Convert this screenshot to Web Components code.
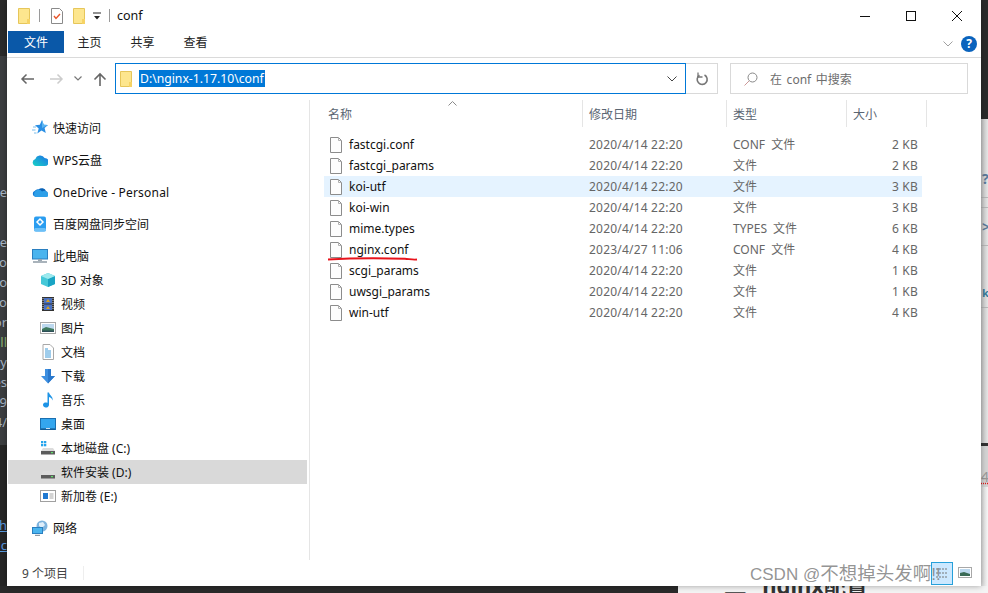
<!DOCTYPE html>
<html lang="zh">
<head>
<meta charset="utf-8">
<title>conf</title>
<style>
    html, body { margin: 0; padding: 0; }
    body { font-family: "Noto Sans", "Noto Sans CJK SC", sans-serif; overflow: hidden; }
</style>
</head>
<body>
<desktop-frame>
    <title-bar slot="title">conf</title-bar>
    <ribbon-tabs slot="tabs"></ribbon-tabs>
    <address-row slot="address" path="D:\nginx-1.17.10\conf" search="在 conf 中搜索"></address-row>
    <nav-tree slot="nav">
        <nav-group>
            <nav-item icon="star">快速访问</nav-item>
        </nav-group>
        <nav-group>
            <nav-item icon="wps">WPS云盘</nav-item>
        </nav-group>
        <nav-group>
            <nav-item icon="onedrive" style="letter-spacing:.2px">OneDrive - Personal</nav-item>
        </nav-group>
        <nav-group>
            <nav-item icon="baidu">百度网盘同步空间</nav-item>
        </nav-group>
        <nav-group>
            <nav-item icon="pc">此电脑</nav-item>
            <nav-item sub icon="cube">3D 对象</nav-item>
            <nav-item sub icon="video">视频</nav-item>
            <nav-item sub icon="pic">图片</nav-item>
            <nav-item sub icon="doc">文档</nav-item>
            <nav-item sub icon="down">下载</nav-item>
            <nav-item sub icon="music">音乐</nav-item>
            <nav-item sub icon="desk">桌面</nav-item>
            <nav-item sub icon="drivec">本地磁盘 (C:)</nav-item>
            <nav-item sub selected icon="drive">软件安装 (D:)</nav-item>
            <nav-item sub icon="drivee">新加卷 (E:)</nav-item>
        </nav-group>
        <nav-group>
            <nav-item icon="net">网络</nav-item>
        </nav-group>
    </nav-tree>
    <file-list slot="files">
        <file-row name="fastcgi.conf" date="2020/4/14 22:20" type="CONF 文件" size="2 KB"></file-row>
        <file-row name="fastcgi_params" date="2020/4/14 22:20" type="文件" size="2 KB"></file-row>
        <file-row hover name="koi-utf" date="2020/4/14 22:20" type="文件" size="3 KB"></file-row>
        <file-row name="koi-win" date="2020/4/14 22:20" type="文件" size="3 KB"></file-row>
        <file-row name="mime.types" date="2020/4/14 22:20" type="TYPES 文件" size="6 KB"></file-row>
        <file-row marked name="nginx.conf" date="2023/4/27 11:06" type="CONF 文件" size="4 KB"></file-row>
        <file-row name="scgi_params" date="2020/4/14 22:20" type="文件" size="1 KB"></file-row>
        <file-row name="uwsgi_params" date="2020/4/14 22:20" type="文件" size="1 KB"></file-row>
        <file-row name="win-utf" date="2020/4/14 22:20" type="文件" size="4 KB"></file-row>
    </file-list>
    <status-bar slot="status">9 个项目</status-bar>
</desktop-frame>

<script>
{
    // small svg icons, all in a 16x16 box
    const icons = {
        star: `<path d="M10 0l1.700 4.700 4.300.3-3.400 3 1.200 5L9.500 10.400 5.300 13.500l1.400-5L3 5.300l4.800-.5z" fill="#2a8fe4"/><path d="M10 0l1.700 4.700 4.300.3-6 3z" fill="#5cb6f2"/><path d="M1 7h3M0 10h3.500M2 13h2.500" stroke="#79bcea" fill="none"/>`,
        wps: `<defs><linearGradient id="w" x1="0" y1="1" x2="1" y2="0"><stop offset="0" stop-color="#19d3c5"/><stop offset="1" stop-color="#1c6fe8"/></linearGradient></defs><path d="M4 14a3.500 3.500 0 0 1-.6-6.900A5 5 0 0 1 12.600 6 4 4 0 0 1 12.500 14z" fill="url(#w)"/>`,
        onedrive: `<path d="M6.500 5.500a4.600 4.600 0 0 1 7.600 1.800A3.400 3.400 0 0 1 16 8.500L9 11z" fill="#0a64b8"/><path d="M3 12.500A2.900 2.900 0 0 1 2.600 7 4.600 4.600 0 0 1 8.800 6.600L11 9z" fill="#0f78d4"/><path d="M3 13h11.400a2.300 2.300 0 0 0 1-4.400A4 4 0 0 0 10 7.500 3.500 3.500 0 0 0 3 13z" fill="#2d9fe8"/>`,
        baidu: `<rect x="2" y="0.500" width="12" height="15" rx="2" fill="#2a9df0"/><rect x="2" y="12" width="12" height="3.500" rx="1.500" fill="#6cc0f7"/><path d="M8 3l3 3-3 3-3-3z" fill="none" stroke="#fff" stroke-width="1.500"/>`,
        pc: `<rect x="0.500" y="1.500" width="15" height="9.500" fill="#4ab4ee" stroke="#2a7fc0"/><rect x="6" y="11" width="4" height="2" fill="#9aa7b2"/><path d="M1 14h14" stroke="#8d9aa5" stroke-width="1.500"/>`,
        cube: `<path d="M8 1l7 3v8l-7 3-7-3V4z" fill="#45c8d8"/><path d="M8 7l7-3v8l-7 3z" fill="#19a4c4"/><path d="M8 1l7 3-7 3-7-3z" fill="#9ce9ee"/>`,
        video: `<rect x="2" y="1" width="12" height="14" fill="#333"/><rect x="4" y="2" width="8" height="5.500" fill="#4a72c4"/><rect x="4" y="8.500" width="8" height="5.500" fill="#4a72c4"/><path d="M6 6l2-3 2 3zM6 13l2-3 2 3z" fill="#d8a020"/><path d="M3 2v12" stroke="#ccc" stroke-dasharray="1 1"/><path d="M13 2v12" stroke="#ccc" stroke-dasharray="1 1"/>`,
        pic: `<rect x="0.500" y="2.500" width="15" height="11" fill="#fff" stroke="#a8a8a8"/><rect x="2" y="4" width="12" height="8" fill="#bcd8ee"/><path d="M2 9l4-2 8 2v3H2z" fill="#3f7a5e"/><path d="M2 10.500h12V12H2z" fill="#2e4f58"/>`,
        doc: `<path d="M3 .5h7l3.500 3.500v11.500H3z" fill="#fff" stroke="#a8a8a8"/><path d="M5 5h3M5 7h6M5 9h6M5 11h6M5 13h6" stroke="#3f9ad8"/>`,
        down: `<path d="M5 1h6v7h4l-7 7.500L1 8h4z" fill="#3d8fe0"/><path d="M8 1h3v7h4l-7 7.500z" fill="#2a78cc"/>`,
        music: `<path d="M7.500 0.500h1.500c.5 3 4.500 4 3.500 8-.4-2-2-3.200-3.500-3.500V13a3 2.500 0 1 1-1.500-2.200z" fill="#1e94e6"/>`,
        desk: `<rect x="0.500" y="2.500" width="15" height="11" fill="#34a6ee" stroke="#1a6fb0"/><path d="M1 13h14" stroke="#0e4d80"/><rect x="6" y="12" width="4" height="1" fill="#cde"/>`,
        drivec: `<rect x="1" y="1" width="2.300" height="2.300" fill="#25a4ec"/><rect x="4" y="1" width="2.300" height="2.300" fill="#25a4ec"/><rect x="1" y="4" width="2.300" height="2.300" fill="#25a4ec"/><rect x="4" y="4" width="2.300" height="2.300" fill="#25a4ec"/><path d="M3 8h10l2 3H1z" fill="#dcdcdc"/><rect x="1" y="11" width="14" height="3.500" fill="#5c5c5c"/><rect x="11" y="12" width="2" height="1.200" fill="#5fe06a"/>`,
        drive: `<path d="M3 7h10l2 4H1z" fill="#dcdcdc"/><rect x="1" y="11" width="14" height="3.500" fill="#5c5c5c"/><rect x="11" y="12" width="2" height="1.200" fill="#5fe06a"/>`,
        drivee: `<rect x="0.500" y="2.500" width="15" height="11" fill="#fff" stroke="#a0a0a0"/><rect x="3" y="5" width="5" height="6" fill="#1f78d1"/><path d="M9.500 6h4M9.500 8h4M9.500 10h4" stroke="#a8a8a8"/>`,
        net: `<circle cx="10" cy="6" r="5.500" fill="#7fb4de"/><path d="M7 3l4-1 2 3-3 3-3-2z" fill="#dfeefa"/><rect x="0.500" y="7.500" width="10" height="6" fill="#4ab4ee" stroke="#2a7fc0"/><path d="M3 15.500h5" stroke="#8d9aa5" stroke-width="1.500"/>`
    };
    const folder = `<svg width="12" height="16" viewBox="0 0 12 16"><path d="M.5.500h11v15H.5z" fill="#fde68e" stroke="#e6c65a"/><path d="M9 11h3v5H9z" fill="#f6d365"/></svg>`;

    class DesktopFrame extends HTMLElement {
        constructor() {
            super();
            this.attachShadow({ mode: "open" }).innerHTML = `
            <style>
                :host { display:grid; grid-template-columns:7px 974px 7px; grid-template-rows:586px 7px; width:988px; height:593px; overflow:hidden; }
                #left { background:#3c3e40; overflow:hidden; display:flex; flex-direction:column; font:13px/20px "Noto Sans", sans-serif; color:#a9b7c6; }
                #left .top { height:56px; background:#2b2b2b; flex:none; }
                #left .mid { height:389px; flex:none; padding-top:126px; box-sizing:border-box; }
                #left .mid div { width:7px; height:20px; direction:rtl; white-space:nowrap; overflow:hidden; }
                #left .mid .gap { height:30px; }
                #left .low { flex:1; background:#262626; padding-top:70px; color:#5a9be0; text-decoration:underline; }
                #left .low div { width:7px; overflow:hidden; white-space:nowrap; direction:rtl; }
                #window { background:#fff; display:flex; flex-direction:column; min-width:0; box-shadow:0 0 6px rgba(0,0,0,.35); position:relative; z-index:1; }
                #right { display:flex; flex-direction:column; overflow:hidden; font:bold 14px/16px "Noto Sans", sans-serif; color:#5b7a9a; }
                #right .dark { height:119px; background:#2b2b2b; flex:none; }
                #right .row { background:linear-gradient(90deg,#c4c4c4,#e6e6e6); border-bottom:1px solid #b8b8b8; flex:none; box-sizing:border-box; display:flex; align-items:flex-end; padding-left:1px; }
                #right .line { height:3px; background:#333; flex:none; }
                #right .grey { height:41px; background:#d4d4d4; flex:none; color:#999; font-weight:normal; padding-top:23px; box-sizing:border-box; text-decoration:underline dotted #e01818; }
                #right .end { flex:1; background:linear-gradient(90deg,#d8d8d8,#f6f6f6); }
                #bottom { grid-column:1 / 4; background:linear-gradient(90deg,#2a2a2a 678px,#f4f4f4 678px); overflow:hidden; white-space:nowrap; font:bold 22px/24px "Noto Sans", "Noto Sans CJK SC", sans-serif; color:#333; padding-left:697px; box-sizing:border-box; }
                #bottom .line { display:block; margin-top:-16px; }
                #bottom .ticks { font:normal 10px/24px "Noto Sans", sans-serif; color:#999; margin-right:16px; vertical-align:8px; }
                #bottom .num { vertical-align:-8px; }
                #bottom .word { text-decoration:underline dotted #e01818 1px; text-underline-offset:1px; margin-left:-6px; }
                #main { flex:1; display:flex; min-height:0; }
            </style>
            <div id="left">
                <div class="top"></div>
                <div class="mid"><div>e[</div><div class="gap"></div><div>e</div><div>ro</div><div>o</div><div>ro</div><div>or</div><div style="color:#8fb573">all</div><div>ry</div><div>es</div><div>x9</div><div>/4</div></div>
                <div class="low"><div>1h</div><div>1c</div></div>
            </div>
            <div id="window">
                <slot name="title"></slot>
                <slot name="tabs"></slot>
                <slot name="address"></slot>
                <div id="main">
                    <slot name="nav"></slot>
                    <slot name="files"></slot>
                </div>
                <slot name="status"></slot>
            </div>
            <div id="right">
                <div class="dark"></div>
                <div class="row" style="height:79px;padding-bottom:10px">?</div>
                <div class="row" style="height:10px"></div>
                <div class="row" style="height:38px;padding-bottom:10px">&gt;</div>
                <div class="row" style="height:62px;padding-bottom:6px;color:#3a7c9a;font-size:11px">k</div>
                <div class="row" style="height:135px;border:0"></div>
                <div class="line"></div>
                <div class="grey">4</div>
                <div class="end"></div>
            </div>
            <div id="bottom"><span class="line"><span class="ticks">///</span><span class="num">一、</span><span class="word">nginx</span>配置</span></div>
            `;
        }
    }

    class TitleBar extends HTMLElement {
        constructor() {
            super();
            this.attachShadow({ mode: "open" }).innerHTML = `
            <style>
                :host { display:flex; align-items:center; height:31px; font-size:12.500px; color:#111; }
                .quick { display:flex; align-items:center; padding-left:11px; }
                .sep { width:1px; height:13px; background:#9a9a9a; }
                .text { flex:1; margin-left:7px; }
                .btn { width:46px; height:31px; display:flex; align-items:center; justify-content:center; }
                svg { display:block; }
                .buttons { display:flex; padding-right:1px; }
            </style>
            <div class="quick">
                ${folder}
                <span class="sep" style="margin:0 11px 0 9px"></span>
                <svg width="12" height="16" viewBox="0 0 12 16"><path d="M.5.500h8l3 3v12H.5z" fill="#fff" stroke="#8a8a8a"/><path d="M3 8l2 2.500L9 6" fill="none" stroke="#e8552a" stroke-width="1.400"/></svg>
                <span style="width:10px"></span>
                ${folder}
                <svg style="margin-left:8px" width="8" height="8" viewBox="0 0 8 8"><path d="M0 1h8" stroke="#222"/><path d="M1 4h6L4 7.500z" fill="#222"/></svg>
                <span class="sep" style="margin-left:8px"></span>
            </div>
            <div class="text"><slot></slot></div>
            <div class="buttons">
                <div class="btn"><svg width="10" height="10"><path d="M0 5.500h10" stroke="#111"/></svg></div>
                <div class="btn"><svg width="10" height="10"><rect x=".5" y=".5" width="9" height="9" fill="none" stroke="#111"/></svg></div>
                <div class="btn"><svg width="10" height="10"><path d="M0 0l10 10M10 0L0 10" stroke="#111"/></svg></div>
            </div>
            `;
        }
    }

    class RibbonTabs extends HTMLElement {
        constructor() {
            super();
            this.attachShadow({ mode: "open" }).innerHTML = `
            <style>
                :host { display:flex; align-items:flex-start; height:26px; border-bottom:1px solid #dadada; padding-left:1px; font-size:12px; color:#222; line-height:24px; }
                .file { width:56px; height:22px; background:#0a58a8; color:#fff; text-align:center; }
                .tab { width:53px; height:22px; text-align:center; }
                .first { margin-left:-1px; }
                .end { margin-left:auto; height:26px; display:flex; align-items:center; padding-right:4px; gap:8px; }
                .help { width:16px; height:16px; border-radius:50%; background:#0a63bd; color:#fff; font:bold 12px/16px "Noto Sans", sans-serif; text-align:center; }
            </style>
            <div class="file">文件</div>
            <div class="tab first">主页</div>
            <div class="tab">共享</div>
            <div class="tab">查看</div>
            <div class="end">
                <svg width="10" height="6"><path d="M.5.500L5 5 9.500.5" fill="none" stroke="#a0a0a0"/></svg>
                <div class="help">?</div>
            </div>
            `;
        }
    }

    class AddressRow extends HTMLElement {
        constructor() {
            super();
            const path = this.getAttribute("path");
            const search = this.getAttribute("search");
            this.attachShadow({ mode: "open" }).innerHTML = `
            <style>
                :host { display:flex; align-items:flex-start; height:42px; box-sizing:border-box; padding-top:5px; font-size:12.200px; }
                .nav { width:108px; height:31px; display:flex; align-items:center; flex:none; padding-left:13px; box-sizing:border-box; }
                .box { height:31px; box-sizing:border-box; display:flex; align-items:center; }
                .path { width:571px; border:1px solid #0078d7; padding:0 8px 0 4px; flex:none; }
                .path mark { background:#0078d7; color:#fff; margin-left:7px; padding:0 1px; line-height:17px; }
                .path svg:last-child { margin-left:auto; }
                .refresh { width:32px; border:1px solid #d9d9d9; border-left:0; justify-content:center; flex:none; }
                .search { width:238px; margin-left:12px; border:1px solid #d9d9d9; padding-left:13px; color:#6d6d6d; gap:12px; flex:none; font-size:12px; word-spacing:1.500px; }
            </style>
            <div class="nav">
                <svg width="14" height="12" viewBox="0 0 14 12"><path d="M14 6H2M6.500 1.500L2 6l4.500 4.500" fill="none" stroke="#666" stroke-width="1.500"/></svg>
                <svg style="margin-left:16px" width="14" height="12" viewBox="0 0 14 12"><path d="M0 6h12M7.500 1.500L12 6l-4.500 4.500" fill="none" stroke="#ccc" stroke-width="1.500"/></svg>
                <svg style="margin-left:10px" width="8" height="5" viewBox="0 0 8 5"><path d="M.5.500L4 4 7.500.5" fill="none" stroke="#777" stroke-width="1.200"/></svg>
                <svg style="margin-left:11px" width="14" height="14" viewBox="0 0 14 14"><path d="M7 14V2M1.500 7.500L7 2l5.500 5.500" fill="none" stroke="#666" stroke-width="1.600"/></svg>
            </div>
            <div class="box path">
                ${folder}
                <mark>${path}</mark>
                <svg width="10" height="6"><path d="M.5.500L5 5 9.500.5" fill="none" stroke="#444"/></svg>
            </div>
            <div class="box refresh">
                <svg width="14" height="14" viewBox="0 0 14 14"><path d="M4.500 3.200A5 5 0 1 0 9.500 3" fill="none" stroke="#777" stroke-width="1.600"/><path d="M3 .5v4.500h4.500" fill="none" stroke="#777" stroke-width="1.300"/></svg>
            </div>
            <div class="box search">
                <svg width="14" height="14" viewBox="0 0 14 14"><circle cx="8.500" cy="5.500" r="4.500" fill="none" stroke="#888"/><path d="M5.200 8.800L.5 13.500" stroke="#c99" stroke-width="1"/></svg>
                <span>${search}</span>
            </div>
            `;
        }
    }

    class NavTree extends HTMLElement {
        constructor() {
            super();
            this.attachShadow({ mode: "open" }).innerHTML = `
            <style>
                :host { display:flex; flex-direction:column; gap:8px; width:303px; height:460px; padding-top:16px; box-sizing:border-box; border-right:1px solid #e5e5e5; flex:none; }
            </style>
            <slot></slot>
            `;
        }
    }

    class NavGroup extends HTMLElement {
        constructor() {
            super();
            this.attachShadow({ mode: "open" }).innerHTML = `
            <style>:host { display:flex; flex-direction:column; }</style>
            <slot></slot>
            `;
        }
    }

    class NavItem extends HTMLElement {
        constructor() {
            super();
            const svg = icons[this.getAttribute("icon")];
            this.attachShadow({ mode: "open" }).innerHTML = `
            <style>
                :host { display:flex; align-items:center; height:24px; margin-left:1px; width:299px; padding-left:24px; box-sizing:border-box; gap:5px; font-size:12px; color:#111; white-space:nowrap; }
                :host([sub]) { padding-left:32px; }
                :host([selected]) { background:#d9d9d9; }
                svg { flex:none; display:block; }
            </style>
            <svg width="16" height="16" viewBox="0 0 16 16">${svg}</svg>
            <slot></slot>
            `;
        }
    }

    class FileList extends HTMLElement {
        constructor() {
            super();
            this.attachShadow({ mode: "open" }).innerHTML = `
            <style>
                :host { display:flex; flex-direction:column; flex:1; min-width:0; position:relative; font-size:12px; }
                .head { display:grid; grid-template-columns:272px 144px 120px 80px; height:28px; margin-left:1px; color:#5a6572; }
                .head div { border-right:1px solid #e5e5e5; padding-left:6px; line-height:29px; height:27px; box-sizing:border-box; }
                .head div:first-child { padding-left:17px; }
                .sort { position:absolute; left:138px; top:1px; }
                .rows { display:flex; flex-direction:column; padding:6px 0 0 14px; }
            </style>
            <div class="head">
                <div>名称</div><div>修改日期</div><div>类型</div><div>大小</div>
            </div>
            <svg class="sort" width="9" height="5" viewBox="0 0 9 5"><path d="M.5 4.500L4.500.5l4 4" fill="none" stroke="#8a8a8a"/></svg>
            <div class="rows"><slot></slot></div>
            `;
        }
    }

    class FileRow extends HTMLElement {
        constructor() {
            super();
            const get = (n) => this.getAttribute(n);
            this.attachShadow({ mode: "open" }).innerHTML = `
            <style>
                :host { display:grid; grid-template-columns:24px 240px 144px 120px 66px; align-items:center; width:598px; height:21px; position:relative; color:#666; white-space:nowrap; }
                :host([hover]) { background:#e5f3ff; }
                svg.file { margin-left:6px; display:block; }
                .name { color:#111; margin-left:1px; }
                .date { letter-spacing:.2px; margin-left:1px; }
                .type { word-spacing:3px; margin-left:1px; margin-top:-1px; }
                .size { text-align:right; letter-spacing:.2px; }
                .mark { position:absolute; left:3px; top:17px; }
            </style>
            <svg class="file" width="12" height="16" viewBox="0 0 12 16"><path d="M.5.500h8l3 3v12H.5z" fill="#fdfdfd" stroke="#8c8c8c"/><path d="M8.500.5v3h3" fill="none" stroke="#b0b0b0"/></svg>
            <span class="name">${get("name")}</span>
            <span class="date">${get("date")}</span>
            <span class="type">${get("type")}</span>
            <span class="size">${get("size")}</span>
            ${this.hasAttribute("marked") ? `<svg class="mark" width="92" height="6" viewBox="0 0 92 6"><path d="M1 3.500C25 2 55 2 78 2.700c4 .2 7 1.300 12 .8" fill="none" stroke="#e8141c" stroke-width="1.900"/></svg>` : ""}
            `;
        }
    }

    class StatusBar extends HTMLElement {
        constructor() {
            super();
            this.attachShadow({ mode: "open" }).innerHTML = `
            <style>
                :host { display:flex; align-items:center; height:26px; padding-left:15px; font-size:12px; color:#444; position:relative; }
                .sep { width:1px; height:14px; background:#eee; margin-left:15px; }
                .views { margin-left:auto; display:flex; align-items:center; gap:5px; padding-right:9px; }
                .list { width:20px; height:21px; border:1px solid #26a0da; background:#cce8ff; display:flex; align-items:center; justify-content:center; }
                .mark { position:absolute; left:743px; top:0; font:17px/28px "Liberation Sans", "Noto Sans CJK SC", sans-serif; color:rgba(120,120,120,.8); white-space:nowrap; }
                .mark b { font-weight:normal; font-size:18.500px; }
            </style>
            <slot></slot>
            <span class="sep"></span>
            <div class="views">
                <div class="list"><svg width="12" height="12"><path d="M0 2h12M0 6h12M0 10h12" stroke="#777" stroke-dasharray="2 1"/></svg></div>
                <svg width="14" height="14" viewBox="0 0 14 14"><rect x=".5" y="1.500" width="13" height="10" fill="#fff" stroke="#a8a8a8"/><rect x="2" y="3" width="10" height="7" fill="#bcd8ee"/><path d="M2 7l4-1 6 2v2H2z" fill="#3a6a55"/></svg>
            </div>
            <div class="mark">CSDN @<b>不想掉头发啊</b>!!</div>
            `;
        }
    }

    customElements.define("desktop-frame", DesktopFrame);
    customElements.define("title-bar", TitleBar);
    customElements.define("ribbon-tabs", RibbonTabs);
    customElements.define("address-row", AddressRow);
    customElements.define("nav-tree", NavTree);
    customElements.define("nav-group", NavGroup);
    customElements.define("nav-item", NavItem);
    customElements.define("file-list", FileList);
    customElements.define("file-row", FileRow);
    customElements.define("status-bar", StatusBar);
}
</script>
</body>
</html>
